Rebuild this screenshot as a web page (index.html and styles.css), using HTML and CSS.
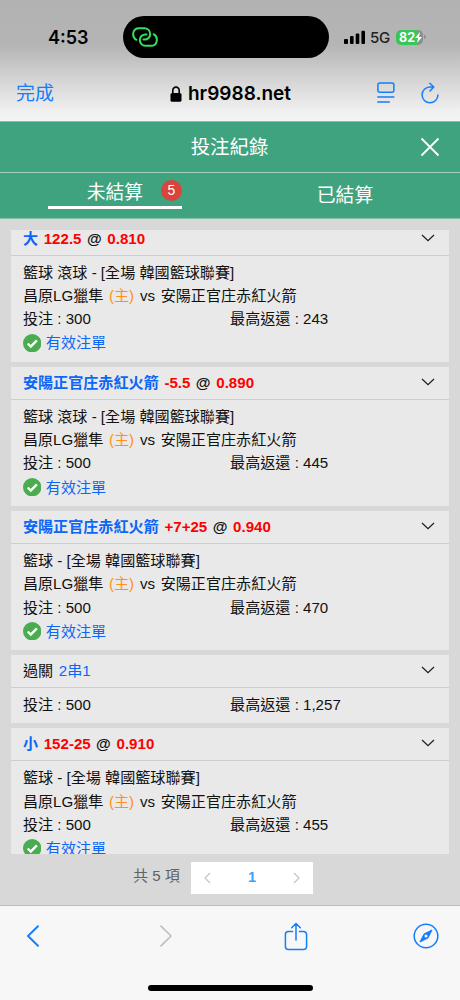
FILE: index.html
```html
<!DOCTYPE html>
<html lang="zh-Hant">
<head>
<meta charset="utf-8">
<title>投注紀錄</title>
<link rel="stylesheet" href="styles.css">
</head>
<body>
<svg width="0" height="0" class="defs">
  <symbol id="chevron" viewBox="0 0 14 8"><path d="M1 1l6 5.7L13 1" fill="none" stroke="#222" stroke-width="1.3"/></symbol>
  <symbol id="check" viewBox="0 0 18 18"><circle cx="9" cy="9" r="9" fill="#49ad50"/><path d="M4.6 9.3l3 3 6-6.1" fill="none" stroke="#fff" stroke-width="2.4"/></symbol>
</svg>
<header class="top">
  <div class="status">
    <div class="clock">4:53</div>
    <div class="island">
      <svg width="26" height="20" viewBox="0 0 26 20" fill="none" stroke="#30e35c" stroke-width="2" stroke-linecap="round"><path d="M4.3 12.8C-.5 10 .2 1.2 7 1.2h5.5a5.7 5.7 0 0 1 0 11.4h-1"/><path d="M21.7 7.2C26.5 10 25.8 18.8 19 18.8h-5.5a5.7 5.7 0 0 1 0-11.4h1"/></svg>
    </div>
    <div class="signals">
      <svg width="22" height="14" viewBox="0 0 22 14"><rect x="0" y="9" width="4" height="5" rx="1"/><rect x="6" y="6" width="3.6" height="8" rx="1"/><rect x="11.7" y="3.5" width="3.6" height="10.5" rx="1"/><rect x="17.4" y="0.8" width="3.6" height="13.2" rx="1"/></svg>
      <span class="net">5G</span>
      <span class="battery"><span>82</span><svg width="7" height="11" viewBox="0 0 7 11"><path d="M5 0L0 6h3L2 11l5-6H4z" fill="#fff"/></svg></span><i class="cap"></i>
    </div>
  </div>
  <div class="address">
    <span class="done">完成</span>
    <div class="host"><svg width="12" height="16" viewBox="0 0 12 16"><rect x="0.5" y="7" width="11" height="8.8" rx="1.6"/><path d="M2.8 7V4.5a3.2 3.4 0 0 1 6.4 0V7" fill="none" stroke="#000" stroke-width="1.6"/></svg><span>hr9988.net</span></div>
    <div class="tools">
      <svg width="18" height="22" viewBox="0 0 18 22" fill="none" stroke="#147efb" stroke-width="1.5" stroke-linecap="round"><rect x="0.9" y="0.9" width="16" height="9.4" rx="2"/><path d="M.8 15h16M.8 20h11.5"/></svg>
      <svg width="18" height="22" viewBox="0 0 18 22" fill="none" stroke="#147efb" stroke-width="1.5" stroke-linecap="round" stroke-linejoin="round"><path d="M12.3 5H9a7.9 7.9 0 1 0 7.9 7.9M8.8 1.2L12.8 5 9 9"/></svg>
    </div>
  </div>
</header>
<div class="titlebar"><h1>投注紀錄</h1><svg width="20" height="20" viewBox="0 0 20 20"><path d="M1.5 1.5l17 17M18.5 1.5l-17 17" stroke="#fff" stroke-width="1.8"/></svg></div>
<nav class="tabs">
  <div class="tab"><div class="active"><span>未結算</span><b class="count">5</b></div></div>
  <div class="tab second"><span>已結算</span></div>
</nav>
<main class="content">
  <div class="list">
    <section class="card">
      <div class="head"><p><b class="pick">大</b> <b class="odds">122.5</b> <b class="at">@</b> <b class="odds">0.810</b></p><svg class="chev"><use href="#chevron"/></svg></div>
      <div class="body">
        <p>籃球 滾球 - [全場 韓國籃球聯賽]</p>
        <p>昌原LG獵隼 <span class="home">(主)</span> vs <span class="away">安陽正官庄赤紅火箭</span></p>
        <div class="stake"><p>投注 : 300</p><p>最高返還 : 243</p></div>
        <div class="valid"><svg><use href="#check"/></svg><span>有效注單</span></div>
      </div>
    </section>
    <section class="card">
      <div class="head"><p><b class="pick">安陽正官庄赤紅火箭</b> <b class="odds">-5.5</b> <b class="at">@</b> <b class="odds">0.890</b></p><svg class="chev"><use href="#chevron"/></svg></div>
      <div class="body">
        <p>籃球 滾球 - [全場 韓國籃球聯賽]</p>
        <p>昌原LG獵隼 <span class="home">(主)</span> vs <span class="away">安陽正官庄赤紅火箭</span></p>
        <div class="stake"><p>投注 : 500</p><p>最高返還 : 445</p></div>
        <div class="valid"><svg><use href="#check"/></svg><span>有效注單</span></div>
      </div>
    </section>
    <section class="card">
      <div class="head"><p><b class="pick">安陽正官庄赤紅火箭</b> <b class="odds">+7+25</b> <b class="at">@</b> <b class="odds">0.940</b></p><svg class="chev"><use href="#chevron"/></svg></div>
      <div class="body">
        <p>籃球 - [全場 韓國籃球聯賽]</p>
        <p>昌原LG獵隼 <span class="home">(主)</span> vs <span class="away">安陽正官庄赤紅火箭</span></p>
        <div class="stake"><p>投注 : 500</p><p>最高返還 : 470</p></div>
        <div class="valid"><svg><use href="#check"/></svg><span>有效注單</span></div>
      </div>
    </section>
    <section class="card parlay">
      <div class="head"><p>過關 <span class="pick combo">2串1</span></p><svg class="chev"><use href="#chevron"/></svg></div>
      <div class="body">
        <div class="stake"><p>投注 : 500</p><p>最高返還 : 1,257</p></div>
      </div>
    </section>
    <section class="card">
      <div class="head"><p><b class="pick">小</b> <b class="odds">152-25</b> <b class="at">@</b> <b class="odds">0.910</b></p><svg class="chev"><use href="#chevron"/></svg></div>
      <div class="body">
        <p>籃球 - [全場 韓國籃球聯賽]</p>
        <p>昌原LG獵隼 <span class="home">(主)</span> vs <span class="away">安陽正官庄赤紅火箭</span></p>
        <div class="stake"><p>投注 : 500</p><p>最高返還 : 455</p></div>
        <div class="valid"><svg><use href="#check"/></svg><span>有效注單</span></div>
      </div>
    </section>
  </div>
  <div class="pager">
    <span class="total">共 5 項</span>
    <div class="pages">
      <svg width="7" height="12" viewBox="0 0 7 12"><path d="M6 1L1 6l5 5" fill="none" stroke="#c3c6cc" stroke-width="1.3"/></svg>
      <b>1</b>
      <svg width="7" height="12" viewBox="0 0 7 12"><path d="M1 1l5 5-5 5" fill="none" stroke="#c3c6cc" stroke-width="1.3"/></svg>
    </div>
  </div>
</main>
<footer class="toolbar">
  <div class="buttons">
    <svg width="14" height="22" viewBox="0 0 14 22" fill="none" stroke="#147efb" stroke-width="1.9" stroke-linecap="round" stroke-linejoin="round"><path d="M12 1.2L2 11l10 9.8"/></svg>
    <svg width="14" height="22" viewBox="0 0 14 22" fill="none" stroke="#bfbfbf" stroke-width="1.7" stroke-linecap="round" stroke-linejoin="round"><path d="M2 1.2L12 11 2 20.8"/></svg>
    <svg width="24" height="29" viewBox="0 0 24 29" fill="none" stroke="#147efb" stroke-width="1.5" stroke-linecap="round" stroke-linejoin="round"><path d="M8.5 9.5H4.4a3 3 0 0 0-3 3v12a3 3 0 0 0 3 3h15.2a3 3 0 0 0 3-3v-12a3 3 0 0 0-3-3h-4.1M12 18V2M7.7 5.8L12 1.5l4.3 4.3"/></svg>
    <svg width="26" height="26" viewBox="0 0 26 26"><circle cx="13" cy="13" r="11.8" fill="none" stroke="#147efb" stroke-width="1.5"/><path d="M19 7l-4 8-8 4 4-8z" fill="#147efb" stroke="#147efb" stroke-linejoin="round"/><circle cx="13" cy="13" r="1.5" fill="#f7f7f7"/></svg>
  </div>
  <div class="home-bar"></div>
</footer>
</body>
</html>
```
FILE: styles.css
```css
* { box-sizing: border-box; margin: 0; padding: 0; }
body { width: 460px; height: 1000px; overflow: hidden; display: flex; flex-direction: column; background: #d8d8d8; color: #111; font-family: "Liberation Sans", "Noto Sans CJK TC", sans-serif; font-size: 15.1px; }
svg { display: block; flex: none; }
p, span { white-space: nowrap; }
.defs { position: absolute; }

.top { height: 121px; flex: none; background: linear-gradient(#b2b2b2 0, #b5b5b5 45px, #f1f1f1 112px, #f4f4f4 121px); color: #000; font-family: Inter, "Noto Sans CJK TC", sans-serif; }
.status { height: 58px; padding: 16px 0 0 48px; display: flex; }
.clock { width: 75px; height: 42px; line-height: 43px; font-size: 18px; font-weight: 600; }
.island { width: 206px; height: 42px; border-radius: 21px; background: #000; padding: 11px 0 0 9px; }
.signals { height: 42px; padding-left: 15px; display: flex; align-items: center; }
.net { margin-left: 4px; width: 26px; font-size: 15px; letter-spacing: -0.3px; font-weight: 500; color: #222; }
.battery { width: 27px; height: 15px; border-radius: 5px; background: linear-gradient(90deg, #35c759 22px, #8e8e8e 22px); display: flex; align-items: center; padding-left: 3px; color: #fff; font-size: 12.5px; font-weight: 700; }
.cap { width: 2px; height: 4px; margin-left: 1px; border-radius: 0 2px 2px 0; background: #8e8e8e; }
.address { height: 63px; padding: 0 21px 0 16px; display: grid; grid-template-columns: 1fr auto 1fr; align-items: center; }
.address > * { margin-top: 8px; }
.done { font-size: 19px; line-height: 24px; color: #147efb; }
.host { display: flex; align-items: center; gap: 6px; padding-left: 6px; font-size: 19px; line-height: 24px; font-weight: 600; }
.address .tools { display: flex; justify-content: flex-end; gap: 26px; margin-top: 6px; }

.titlebar { height: 51px; flex: none; display: grid; grid-template-columns: 19px 1fr 20px; padding: 0 20px; align-items: center; background: #40a380; color: #fff; border-top: 1px solid #82c0a9; }
.titlebar h1 { grid-column: 2; text-align: center; font-size: 19.4px; font-weight: 400; line-height: 28px; }
.tabs { height: 47px; flex: none; display: grid; grid-template-columns: 1fr 1fr; background: #40a380; color: #fff; border-top: 1px solid #a0cfbf; border-bottom: 1px solid #82c0a9; font-size: 18.8px; }
.tab { display: flex; justify-content: center; }
.active { width: 134px; height: 36px; border-bottom: 3px solid #fff; padding-top: 1px; display: flex; align-items: center; justify-content: flex-end; gap: 18px; }
.count { width: 21px; height: 21px; margin-top: 1px; border-radius: 50%; background: #db433d; font-size: 14px; line-height: 21px; text-align: center; font-weight: 400; }
.second { align-items: center; line-height: 44px; }

.content { height: 686px; flex: none; padding: 11px 11.5px 0 11.4px; }
.list { height: 624px; overflow: hidden; }
.card { height: 138.7px; margin-bottom: 5.4px; background: #e9e9e9; }
.card:first-child { margin-top: -7px; }
.parlay { height: 67.8px; }
.head { height: 33px; border-bottom: 1px solid #cdcdcd; padding: 0 13.5px 0 11.5px; display: flex; align-items: center; justify-content: space-between; line-height: 22px; }
.chev { width: 14px; height: 8px; margin-top: -3px; }
.pick { color: #0d66f5; }
.odds { margin-left: 1.5px; color: #f00; }
.at { margin-left: 1.2px; }
.combo { margin-left: 1.5px; }
.home { margin: 0 1.7px 0 1.3px; color: #ff9118; }
.away { margin-left: 1.4px; }
.body { padding: 5px 11.5px 0; line-height: 23.2px; }
.body p { height: 23.2px; }
.stake { display: grid; grid-template-columns: 207.2px 1fr; }
.valid { height: 25px; display: flex; align-items: center; gap: 4.5px; color: #0d66f5; }
.valid svg { width: 18.4px; height: 18.4px; }

.pager { display: flex; align-items: center; padding: 8px 0 0 121.6px; color: #606266; }
.total { width: 58px; height: 32px; line-height: 27px; }
.pages { width: 122px; height: 32px; background: #fff; display: flex; align-items: center; justify-content: space-between; padding: 0 13px; color: #409eff; font-size: 14.5px; line-height: 28px; }
.pages b { height: 30px; }

.toolbar { flex: 1; background: #f7f7f7; border-top: 1px solid #bbb; display: flex; flex-direction: column; align-items: center; }
.buttons { height: 60px; width: 100%; padding-left: 26px; display: grid; grid-template-columns: 133px 124.5px 129.5px 26px; align-items: center; }
.home-bar { width: 165px; height: 6px; border-radius: 3px; background: #000; margin-top: 19px; }
```
